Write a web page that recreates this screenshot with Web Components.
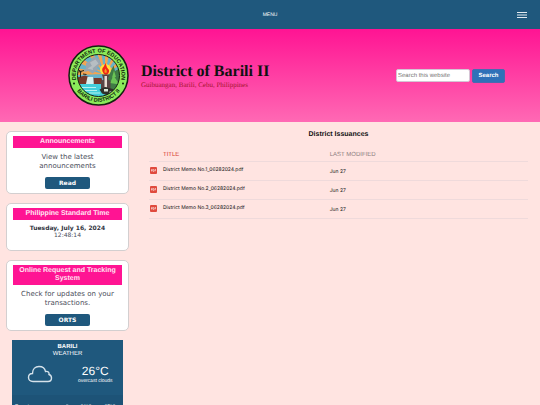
<!DOCTYPE html>
<html lang="en">
<head>
<meta charset="utf-8">
<meta name="viewport" content="width=device-width, initial-scale=1">
<title>District of Barili II</title>
<style>
body {
    margin: 0;
    background-color: #ffe4e1;
    font-family: "Liberation Sans", Arial, sans-serif;
    color: #111;
    text-rendering: geometricPrecision;
}
</style>
</head>
<body>
<district-page>
  <top-menu slot="top">MENU</top-menu>
  <site-banner slot="top">
    <district-seal slot="logo"></district-seal>
    <span slot="title">District of Barili II</span>
    <span slot="place">Guibuangan, Barili, Cebu, Philippines</span>
    <site-search slot="search"></site-search>
  </site-banner>
  <side-card slot="side" heading="Announcements" action="Read">View the latest announcements</side-card>
  <side-card slot="side" heading="Philippine Standard Time">
    <standard-time date="Tuesday, July 16, 2024" time="12:48:14"></standard-time>
  </side-card>
  <side-card slot="side" heading="Online Request and Tracking System" action="ORTS">Check for updates on your transactions.</side-card>
  <weather-widget slot="side"></weather-widget>
  <issuance-list heading="District Issuances"></issuance-list>
</district-page>

<script>
function makeTemplate(html) {
    const template = document.createElement('template')
    template.innerHTML = html
    return template
}

class BaseElement extends HTMLElement {
    constructor() {
        super();
        this.attachShadow({ mode: 'open' });
        this.shadowRoot.appendChild(this.constructor.template.content.cloneNode(true));
    }
}

class DistrictPage extends BaseElement {
    static template = makeTemplate(`<style>
:host {
    display: block;
}
.content {
    display: grid;
    grid-template-columns: 123px 1fr;
    gap: 20px;
    padding: 9px 12px 0 6px;
}
aside {
    display: flex;
    flex-direction: column;
    gap: 9px;
}
main {
    min-width: 0;
}
</style>
<header><slot name="top"></slot></header>
<div class="content">
  <aside><slot name="side"></slot></aside>
  <main><slot></slot></main>
</div>`)
}

class TopMenu extends BaseElement {
    static template = makeTemplate(`<style>
:host {
    display: block;
    background-color: #1f587d;
    color: #fff;
}
nav {
    display: grid;
    grid-template-columns: 1fr auto 1fr;
    align-items: center;
    height: 29px;
    padding: 0 12px;
    box-sizing: border-box;
}
a {
    grid-column: 2;
    color: inherit;
    font-size: 5px;
    text-decoration: none;
}
button {
    justify-self: end;
    display: flex;
    padding: 0;
    border: 0;
    background: none;
    color: inherit;
    cursor: pointer;
}
</style>
<nav>
  <a href="#"><slot></slot></a>
  <button aria-label="Open menu">
    <svg width="12" height="8" viewBox="0 0 12 8" stroke="#e3ebf1" stroke-width="1"><path d="M1 1.500h10M1 4h10M1 6.500h10"/></svg>
  </button>
</nav>`)
}

class SiteBanner extends BaseElement {
    static template = makeTemplate(`<style>
:host {
    display: block;
    background-image: linear-gradient(#ff1493, #ff69b4);
}
.banner {
    display: flex;
    align-items: center;
    gap: 12px;
    padding: 16px 35px 16px 68px;
}
.name {
    flex: 1;
    padding-top: 2px;
    font-family: "Liberation Serif", "Times New Roman", serif;
}
h1 {
    margin: 0;
    font-size: 16px;
    line-height: 18px;
}
p {
    margin: 0;
    font-size: 7px;
    line-height: 9px;
    color: #a5152f;
}
</style>
<div class="banner">
  <slot name="logo"></slot>
  <div class="name">
    <h1><slot name="title"></slot></h1>
    <p><slot name="place"></slot></p>
  </div>
  <slot name="search"></slot>
</div>`)
}

class DistrictSeal extends BaseElement {
    static template = makeTemplate(`<style>
:host {
    display: block;
    width: 61px;
    height: 61px;
}
svg {
    display: block;
}
text {
    font-family: "Liberation Sans", Arial, sans-serif;
    font-weight: bold;
    font-size: 11px;
    fill: #10240c;
}
</style>
<svg width="61" height="61" viewBox="0 0 122 122" role="img" aria-label="District seal">
  <defs>
    <path id="upper" d="M21 83A45.800 45.800 0 1 1 101 83"/>
    <path id="lower" d="M10 75A53 53 0 0 0 112 75"/>
    <clipPath id="disc"><circle cx="61" cy="61" r="42"/></clipPath>
  </defs>
  <circle cx="61" cy="61" r="59" fill="#8bea59" stroke="#12220f" stroke-width="3"/>
  <g clip-path="url(#disc)">
    <path fill="#67b3cb" d="M18 18h86v86H18z"/>
    <g fill="#f2a453">
      <path d="M74 58L18 60V46zM74 58L18 34V20zM74 58L36 14h12zM74 58L57 14h9zM74 58L74 14h9zM74 58L92 16h10zM74 58L106 28v11zM74 58L106 49v11z"/>
    </g>
    <path fill="#9aa5b0" d="M36 36L46 31L50 23L62 28L65 37L58 45L60 50L49 57L41 52L31 54L36 46z"/>
    <path fill="#b7bec3" d="M44 35l11-6 6 8-11 9zM39 47l10-6 1 9z"/>
    <path fill="#3f7c45" d="M82 60l9-19 3 11 9-5 2 30-14 15-16-3z"/>
    <path fill="#6ac455" d="M88 65l4-14 4 13zM84 76l7-15 12 18z"/>
    <path fill="#77382a" d="M18 65l16-4 13 5 5 14-34 3zM51 66h16l4 14H51z"/>
    <path fill="#d9efed" d="M39 64h11l2 18H35z"/>
    <path fill="#43cfda" d="M17 78h57l9 25H30z"/>
    <path stroke="#b7f2ef" stroke-width="2" d="M28 85h28M34 91h24M42 96h22"/>
    <path stroke="#20241e" stroke-width="2" fill="none" d="M21 54l11-3M20 49l7 5M25 52v13M30 58l7 1"/>
    <circle cx="75" cy="49" r="11" fill="#ffe23e"/>
    <path fill="#ef2619" d="M69 53Q67 47 71 44L75 36L78 45L82 50Q83 57 76 60Q71 59 69 53z"/>
    <path fill="#ff9a20" d="M73 55q-1-5 2-8 4 5 2 9z"/>
    <path fill="#594344" d="M68 59h15l-3 10 5 3v16H66V72l5-3z"/>
    <path fill="#e9dbd3" d="M73 62h5v23h-5z"/>
    <path fill="#302f2a" d="M63 89l11-5 16 4 5 8-12 6-15-5z"/>
    <path fill="#dce7d8" d="M72 88h8v5h-8zM83 93h7v4h-7z"/>
  </g>
  <circle cx="61" cy="61" r="42" fill="none" stroke="#17240f" stroke-width="2"/>
  <text><textPath href="#upper" startOffset="50%" text-anchor="middle">DEPARTMENT OF EDUCATION</textPath></text>
  <text><textPath href="#lower" startOffset="50%" text-anchor="middle">BARILI DISTRICT II</textPath></text>
  <circle cx="12" cy="77" r="2" fill="#10240c"/>
  <circle cx="110" cy="77" r="2" fill="#10240c"/>
</svg>`)
}

class SiteSearch extends BaseElement {
    static template = makeTemplate(`<style>
:host {
    display: block;
}
form {
    display: flex;
    align-items: center;
    gap: 2px;
    margin: 0;
}
input {
    width: 74px;
    height: 13px;
    box-sizing: border-box;
    padding: 0 1px;
    border: 1px solid #d5c5d5;
    border-radius: 2px;
    background-color: #fff;
    font-family: "Liberation Sans", Arial, sans-serif;
    font-size: 6px;
    text-rendering: inherit;
}
input::placeholder {
    color: #757575;
}
button {
    width: 33px;
    height: 14px;
    padding: 0;
    border: 1px solid #4a69b0;
    border-radius: 2px;
    background-color: #2f71b8;
    color: #fff;
    font-family: "Liberation Sans", Arial, sans-serif;
    font-size: 6px;
    font-weight: bold;
    text-rendering: inherit;
    cursor: pointer;
}
</style>
<form>
  <input type="search" aria-label="Search this website" placeholder="Search this website">
  <button type="submit">Search</button>
</form>`)
}

class SideCard extends BaseElement {
    static template = makeTemplate(`<style>
:host {
    display: block;
    box-sizing: border-box;
    min-height: 48px;
    padding: 4px 6px;
    border: 1px solid #d3cfd0;
    border-radius: 5px;
    background-color: #fff;
    text-align: center;
}
h2 {
    margin: 0;
    padding: 2px 4px;
    background-color: #ff1493;
    color: #ffe4f2;
    font-size: 7px;
    line-height: 8px;
}
.body {
    margin-top: 5px;
    color: #4a4d5a;
    font-family: "DejaVu Sans", Verdana, sans-serif;
    font-size: 7px;
    line-height: 9px;
}
button {
    display: block;
    width: 45px;
    height: 12px;
    margin: 6px auto 0;
    padding: 0;
    border: 0;
    border-radius: 2px;
    background-color: #1f587d;
    color: #fff;
    font-family: "DejaVu Sans", Verdana, sans-serif;
    font-size: 6px;
    font-weight: bold;
    text-rendering: inherit;
    cursor: pointer;
}
button[hidden] {
    display: none;
}
</style>
<h2></h2>
<div class="body"><slot></slot></div>
<button hidden></button>`)

    connectedCallback() {
        const button = this.shadowRoot.querySelector('button');
        this.shadowRoot.querySelector('h2').textContent = this.getAttribute('heading');
        button.textContent = this.getAttribute('action');
        button.hidden = !this.hasAttribute('action');
    }
}

class StandardTime extends BaseElement {
    static template = makeTemplate(`<style>
:host {
    display: block;
    font-size: 6px;
    line-height: 7px;
}
b {
    display: block;
    color: #30343e;
}
</style>
<b></b>
<time></time>`)

    connectedCallback() {
        this.shadowRoot.querySelector('b').textContent = this.getAttribute('date');
        this.shadowRoot.querySelector('time').textContent = this.getAttribute('time');
    }
}

class WeatherWidget extends BaseElement {
    static template = makeTemplate(`<style>
:host {
    display: block;
    margin: 0 6px;
    background-color: #1f587d;
    color: #fff;
}
h2 {
    margin: 0;
    padding-top: 4px;
    font-size: 6px;
    line-height: 7px;
    font-weight: normal;
    text-align: center;
}
b {
    display: block;
}
.now {
    display: grid;
    grid-template-columns: 1fr 1fr;
    align-items: center;
    justify-items: center;
    padding: 6px 0 11px;
    text-align: center;
}
.temp {
    font-size: 12px;
    line-height: 14px;
}
.sky {
    font-size: 5px;
    line-height: 6px;
}
.day {
    display: grid;
    grid-template-columns: 1fr auto 20px 20px;
    align-items: center;
    gap: 4px;
    padding: 8px 3px;
    background-color: #1d5377;
    font-size: 5px;
    line-height: 8px;
    text-align: center;
}
.day span:first-child {
    text-align: left;
}
</style>
<h2><b>BARILI</b>WEATHER</h2>
<div class="now">
  <svg width="26" height="18" viewBox="0 0 26 18" fill="none" stroke="#d5e2eb" stroke-width="1.400"><path d="M6 16.500C3 16.500 1.500 14.500 1.500 12.500C1.500 10 3 8.500 5.500 8.500C5.500 4 8.500 1.500 12 1.500C15.500 1.500 18 3.500 18.500 6.500C21 6 22.500 7.500 22 9.500C24 10 24.500 11.500 24.500 13C24.500 15 23 16.500 21 16.500z"/></svg>
  <div>
    <div class="temp">26°C</div>
    <div class="sky">overcast clouds</div>
  </div>
</div>
<div class="day">
  <span>Tuesday</span>
  <svg width="9" height="7" viewBox="0 0 26 18" fill="none" stroke="#e6eef4" stroke-width="2"><path d="M6 16.500C3 16.500 1.500 14.500 1.500 12.500C1.500 10 3 8.500 5.500 8.500C5.500 4 8.500 1.500 12 1.500C15.500 1.500 18 3.500 18.500 6.500C21 6 22.500 7.500 22 9.500C24 10 24.500 11.500 24.500 13C24.500 15 23 16.500 21 16.500z"/></svg>
  <span>26°C</span>
  <span>27°C</span>
</div>`)
}

class IssuanceList extends BaseElement {
    static template = makeTemplate(`<style>
:host {
    display: block;
}
h2 {
    margin: 0 0 7px;
    font-size: 7px;
    line-height: 8px;
    text-align: center;
}
table {
    width: 100%;
    border-collapse: collapse;
    table-layout: fixed;
}
th, td {
    box-sizing: border-box;
    padding: 0;
    border-bottom: 1px solid #efdadb;
    text-align: left;
    font-size: 6px;
    line-height: 7px;
}
th {
    height: 15px;
    padding-top: 4px;
    color: #8c7d7e;
    font-weight: normal;
}
th.title {
    color: #d83b31;
}
td {
    height: 19px;
    font-family: Inter, Arial, sans-serif;
    font-size: 5px;
}
td.date {
    padding-top: 3px;
}
.icon {
    width: 14px;
}
.title {
    width: 44%;
}
svg {
    display: block;
    margin-left: 1px;
}
a {
    color: #111;
    text-decoration: none;
}
</style>
<h2></h2>
<table>
  <thead>
    <tr><th class="icon"></th><th class="title">TITLE</th><th>LAST MODIFIED</th></tr>
  </thead>
  <tbody></tbody>
</table>`)

    static files = [
        ['District Memo No.1_06282024.pdf', 'Jun 27'],
        ['District Memo No.2_06282024.pdf', 'Jun 27'],
        ['District Memo No.3_06282024.pdf', 'Jun 27'],
    ]

    connectedCallback() {
        this.shadowRoot.querySelector('h2').textContent = this.getAttribute('heading');
        this.shadowRoot.querySelector('tbody').innerHTML = IssuanceList.files.map(([name, date]) => `<tr>
  <td><svg width="7" height="7" viewBox="0 0 14 14"><rect width="14" height="14" rx="2" fill="#e04a3d"/><path d="M3 9V5h1.500v2H3M6 5v4h1q1 0 1-2T7 5zM10 9V5h2M10 7h1.500" fill="none" stroke="#fff"/></svg></td>
  <td><a href="#">${name}</a></td>
  <td class="date">${date}</td>
</tr>`).join('');
    }
}

window.customElements.define('district-page', DistrictPage);
window.customElements.define('top-menu', TopMenu);
window.customElements.define('site-banner', SiteBanner);
window.customElements.define('district-seal', DistrictSeal);
window.customElements.define('site-search', SiteSearch);
window.customElements.define('side-card', SideCard);
window.customElements.define('standard-time', StandardTime);
window.customElements.define('weather-widget', WeatherWidget);
window.customElements.define('issuance-list', IssuanceList);
</script>
</body>
</html>
